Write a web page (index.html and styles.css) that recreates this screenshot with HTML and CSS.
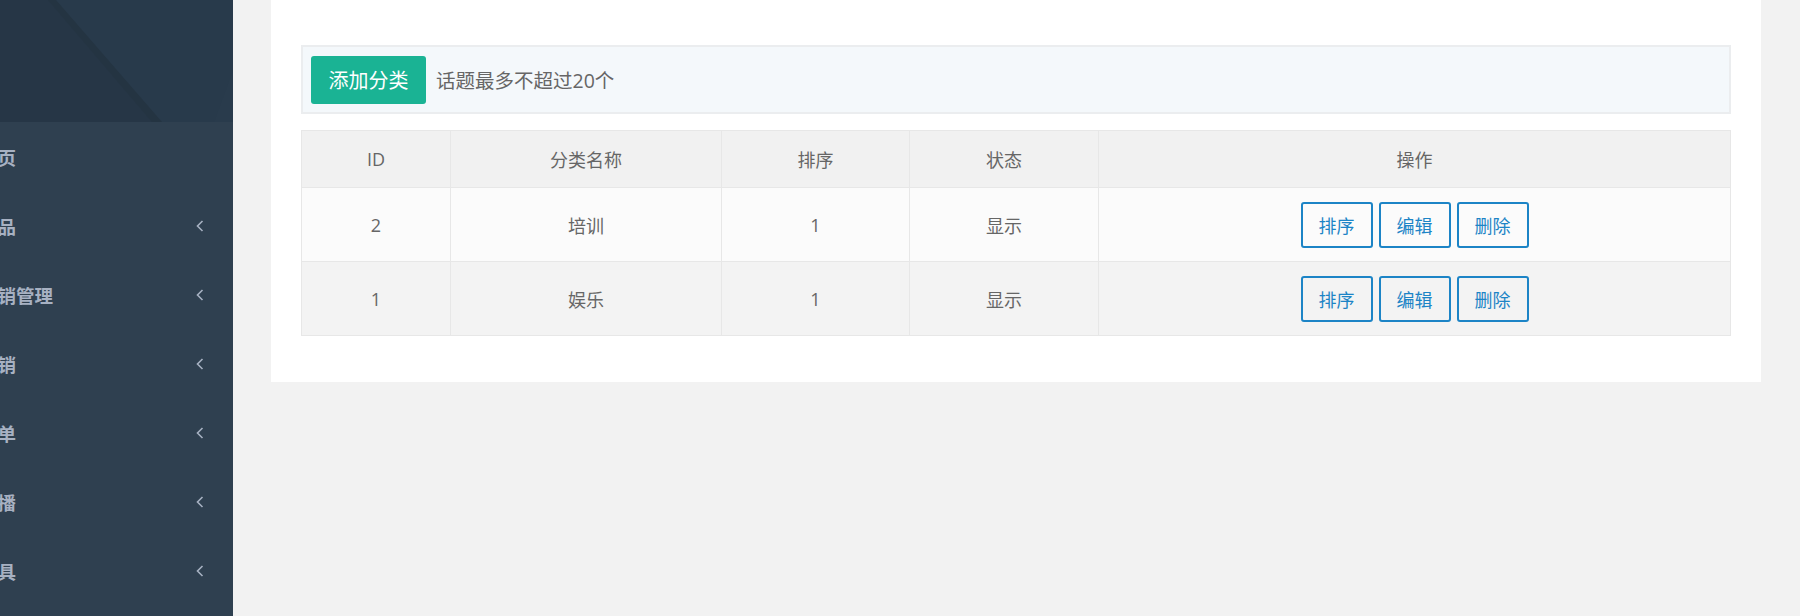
FILE: index.html
```html
<!DOCTYPE html>
<html lang="zh-CN">
<head>
    <meta charset="UTF-8">
    <meta name="viewport" content="width=device-width, initial-scale=1.0">
    <title>话题分类</title>
    <link rel="stylesheet" href="styles.css">
</head>
<body>

<div class="wrapper">
    <nav class="sidebar">
        <div class="sidebar-header">
            <svg class="header-bg" viewBox="0 0 233 122" preserveAspectRatio="none">
                <rect width="233" height="122" fill="#283a4b"/>
                <polygon points="0,0 52,0 160,122 0,122" fill="#263646"/>
                <polygon points="48,0 56,0 162,122 152,122" fill="#243442"/>
                <path d="M233,70 Q222,100 214,122 L233,122 Z" fill="#293b4c"/>
            </svg>
        </div>
        <ul class="menu">
            <li class="menu-item"><span class="label">首页</span></li>
            <li class="menu-item"><span class="label">商品</span><svg class="arrow" viewBox="0 0 8 12"><polyline points="6.5,1 1.5,6 6.5,11"/></svg></li>
            <li class="menu-item"><span class="label">营销管理</span><svg class="arrow" viewBox="0 0 8 12"><polyline points="6.5,1 1.5,6 6.5,11"/></svg></li>
            <li class="menu-item"><span class="label">分销</span><svg class="arrow" viewBox="0 0 8 12"><polyline points="6.5,1 1.5,6 6.5,11"/></svg></li>
            <li class="menu-item"><span class="label">订单</span><svg class="arrow" viewBox="0 0 8 12"><polyline points="6.5,1 1.5,6 6.5,11"/></svg></li>
            <li class="menu-item"><span class="label">直播</span><svg class="arrow" viewBox="0 0 8 12"><polyline points="6.5,1 1.5,6 6.5,11"/></svg></li>
            <li class="menu-item"><span class="label">工具</span><svg class="arrow" viewBox="0 0 8 12"><polyline points="6.5,1 1.5,6 6.5,11"/></svg></li>
        </ul>
    </nav>

    <main class="main">
        <div class="card">
            <div class="alert">
                <button class="btn-add">添加分类</button>
                <span class="tip">话题最多不超过20个</span>
            </div>

            <table class="table">
                <thead>
                    <tr>
                        <th class="col-id">ID</th>
                        <th class="col-name">分类名称</th>
                        <th class="col-sort">排序</th>
                        <th class="col-status">状态</th>
                        <th>操作</th>
                    </tr>
                </thead>
                <tbody>
                    <tr>
                        <td>2</td>
                        <td>培训</td>
                        <td>1</td>
                        <td>显示</td>
                        <td>
                            <div class="actions">
                                <button class="btn-line">排序</button>
                                <button class="btn-line">编辑</button>
                                <button class="btn-line">删除</button>
                            </div>
                        </td>
                    </tr>
                    <tr>
                        <td>1</td>
                        <td>娱乐</td>
                        <td>1</td>
                        <td>显示</td>
                        <td>
                            <div class="actions">
                                <button class="btn-line">排序</button>
                                <button class="btn-line">编辑</button>
                                <button class="btn-line">删除</button>
                            </div>
                        </td>
                    </tr>
                </tbody>
            </table>
        </div>
    </main>
</div>

</body>
</html>
```

FILE: styles.css
```css
body {
    margin: 0;
    font-family: "Open Sans", "Noto Sans CJK SC", sans-serif;
    background-color: #f2f2f2;
    color: #666;
}
.wrapper {
    display: flex;
    height: 616px;
    overflow: hidden;
}

/* sidebar */
.sidebar {
    width: 233px;
    flex-shrink: 0;
    background-color: #2f4050;
    overflow: hidden;
}
.sidebar-header {
    height: 122px;
}
.header-bg {
    display: block;
    width: 100%;
    height: 122px;
}
.menu {
    list-style: none;
    margin: 0;
    padding: 0;
}
.menu-item {
    height: 69px;
    display: flex;
    align-items: center;
    justify-content: space-between;
    padding-right: 29px;
}
.menu-item .label {
    margin-left: -21px;
    font-family: "Noto Sans CJK SC", sans-serif;
    font-size: 18.5px;
    font-weight: 700;
    color: #a7b1c2;
    white-space: nowrap;
}
.arrow {
    width: 8px;
    height: 12px;
    fill: none;
    stroke: #a7b1c2;
    stroke-width: 1.6;
}

/* main */
.main {
    flex: 1;
    padding: 0 39px 0 38px;
}
.card {
    background: #fff;
    padding: 45px 30px 46px;
}
.alert {
    display: flex;
    align-items: center;
    gap: 10px;
    height: 65px;
    padding: 0 8px;
    background-color: #f4f8fb;
    border: 2px solid #ebedef;
}
.btn-add {
    width: 115px;
    height: 48px;
    border: none;
    border-radius: 3px;
    background-color: #1ab394;
    color: #fff;
    font-family: "Open Sans", "Noto Sans CJK SC", sans-serif;
    font-size: 20px;
    padding: 0;
}
.tip {
    font-family: "Open Sans", "Noto Sans CJK SC", sans-serif;
    font-size: 19.5px;
    color: #666;
}

.table {
    width: 100%;
    margin-top: 16px;
    border-collapse: collapse;
    font-size: 18px;
}
.table th, .table td {
    border: 1px solid #e7e7e7;
    text-align: center;
    font-weight: normal;
    color: #666;
    padding: 0;
}
.table th {
    height: 56px;
    background-color: #f1f1f1;
}
.table td {
    height: 73px;
}
.table tbody tr:nth-child(odd) {
    background-color: #fbfbfb;
}
.table tbody tr:nth-child(even) {
    background-color: #f3f3f3;
}
.col-id { width: 148px; }
.col-name { width: 270px; }
.col-sort { width: 187px; }
.col-status { width: 188px; }

.actions {
    display: flex;
    justify-content: center;
    gap: 6px;
}
.btn-line {
    width: 72px;
    height: 46px;
    padding: 0;
    background: transparent;
    border: 2px solid #1c84c6;
    border-radius: 3px;
    color: #1c84c6;
    font-family: "Open Sans", "Noto Sans CJK SC", sans-serif;
    font-size: 18px;
}
```
